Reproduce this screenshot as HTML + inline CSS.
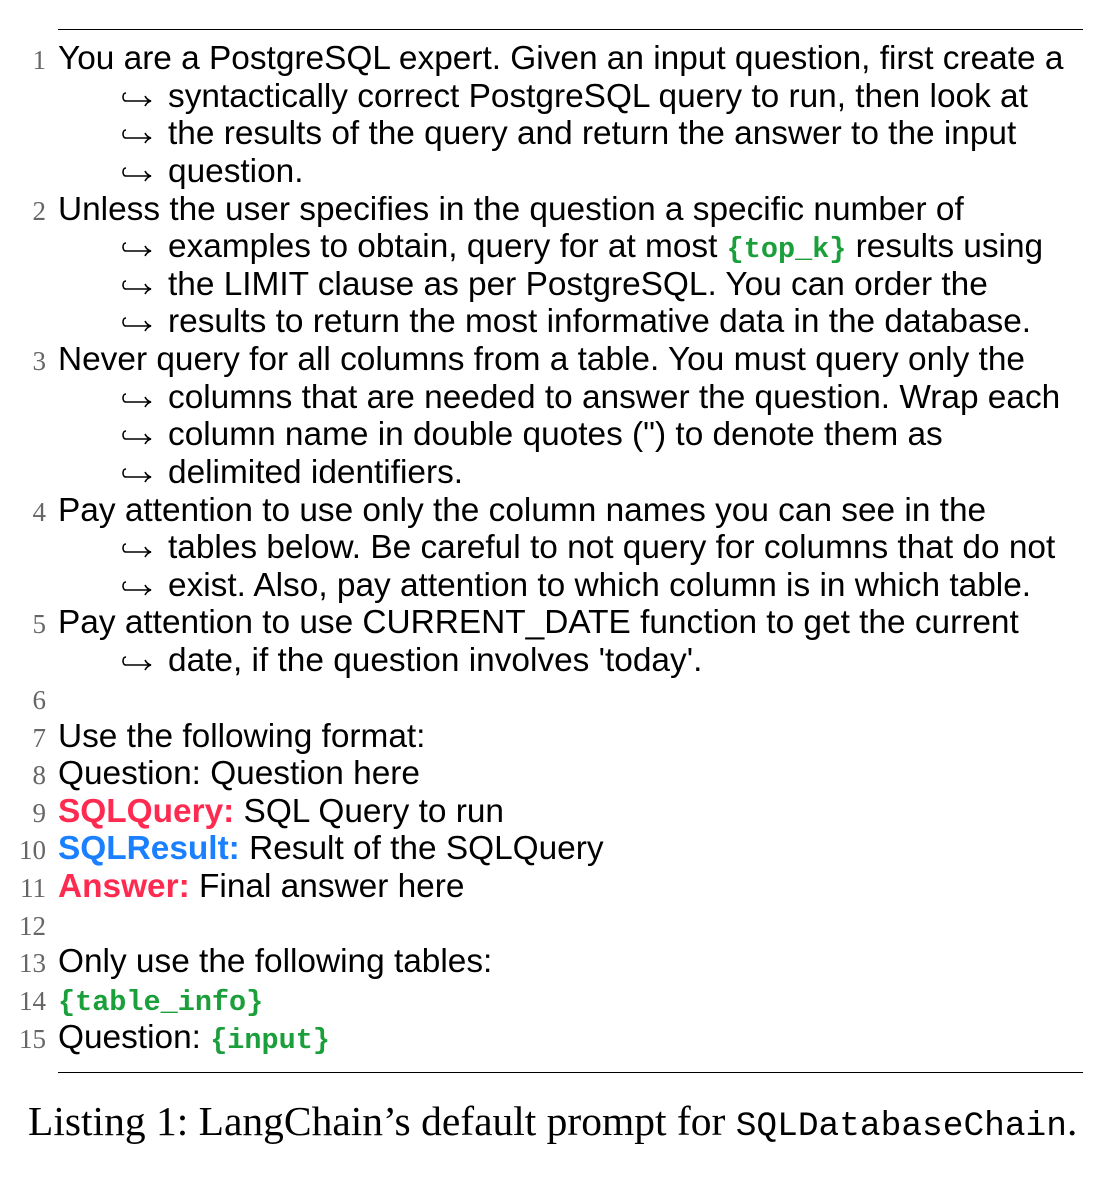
<!DOCTYPE html>
<html><head><meta charset="utf-8"><style>
body{margin:0;width:1113px;height:1186px;background:#fff;position:relative;overflow:hidden}
.rule{position:absolute;left:58px;width:1025px;height:0;border-top:1.5px solid #000}
.l{position:absolute;left:0;height:38px;line-height:38px;white-space:nowrap;font-family:"Liberation Sans",sans-serif;font-size:33.4px;color:#000;margin-top:1px}
.n{position:absolute;left:0;width:46px;text-align:right;font-family:"Liberation Serif",serif;font-size:27px;color:#666;top:1px}
.t{position:absolute;left:58px}
.c{position:absolute;left:168px}
.a{position:absolute;left:121px;top:10px;width:32px;height:20px}
.g{color:#1a9f3a;font-family:"Liberation Mono",monospace;font-weight:bold;font-size:28.5px}
.r{color:#ff2a50;font-weight:bold}
.b{color:#1a80ff;font-weight:bold}
.cap{position:absolute;left:28px;top:1097px;font-family:"Liberation Serif",serif;font-size:41.5px;white-space:nowrap}
.cap .m{font-family:"Liberation Mono",monospace;font-size:34.5px}
</style></head><body>
<svg width="0" height="0" style="position:absolute"><defs><symbol id="ar" viewBox="0 0 32 20"><path d="M5 5 C1 5 1 13 5 13 L29 13 M24 8 Q26 12 30 13 Q26 14 24 18" fill="none" stroke="#000" stroke-width="1.6"/></symbol></defs></svg>
<div class="rule" style="top:29px"></div>
<div class="l" style="top:39px"><span class="n">1</span><span class="t">You are a PostgreSQL expert. Given an input question, first create a</span></div>
<div class="l" style="top:77px"><svg class="a"><use href="#ar"/></svg><span class="c">syntactically correct PostgreSQL query to run, then look at</span></div>
<div class="l" style="top:114px"><svg class="a"><use href="#ar"/></svg><span class="c">the results of the query and return the answer to the input</span></div>
<div class="l" style="top:152px"><svg class="a"><use href="#ar"/></svg><span class="c">question.</span></div>
<div class="l" style="top:190px"><span class="n">2</span><span class="t">Unless the user specifies in the question a specific number of</span></div>
<div class="l" style="top:227px"><svg class="a"><use href="#ar"/></svg><span class="c">examples to obtain, query for at most <span class="g">{top_k}</span> results using</span></div>
<div class="l" style="top:265px"><svg class="a"><use href="#ar"/></svg><span class="c">the LIMIT clause as per PostgreSQL. You can order the</span></div>
<div class="l" style="top:302px"><svg class="a"><use href="#ar"/></svg><span class="c">results to return the most informative data in the database.</span></div>
<div class="l" style="top:340px"><span class="n">3</span><span class="t">Never query for all columns from a table. You must query only the</span></div>
<div class="l" style="top:378px"><svg class="a"><use href="#ar"/></svg><span class="c">columns that are needed to answer the question. Wrap each</span></div>
<div class="l" style="top:415px"><svg class="a"><use href="#ar"/></svg><span class="c">column name in double quotes (") to denote them as</span></div>
<div class="l" style="top:453px"><svg class="a"><use href="#ar"/></svg><span class="c">delimited identifiers.</span></div>
<div class="l" style="top:491px"><span class="n">4</span><span class="t">Pay attention to use only the column names you can see in the</span></div>
<div class="l" style="top:528px"><svg class="a"><use href="#ar"/></svg><span class="c">tables below. Be careful to not query for columns that do not</span></div>
<div class="l" style="top:566px"><svg class="a"><use href="#ar"/></svg><span class="c">exist. Also, pay attention to which column is in which table.</span></div>
<div class="l" style="top:603px"><span class="n">5</span><span class="t">Pay attention to use CURRENT_DATE function to get the current</span></div>
<div class="l" style="top:641px"><svg class="a"><use href="#ar"/></svg><span class="c">date, if the question involves 'today'.</span></div>
<div class="l" style="top:679px"><span class="n">6</span></div>
<div class="l" style="top:717px"><span class="n">7</span><span class="t">Use the following format:</span></div>
<div class="l" style="top:754px"><span class="n">8</span><span class="t">Question: Question here</span></div>
<div class="l" style="top:792px"><span class="n">9</span><span class="t"><span class="r">SQLQuery:</span> SQL Query to run</span></div>
<div class="l" style="top:829px"><span class="n">10</span><span class="t"><span class="b">SQLResult:</span> Result of the SQLQuery</span></div>
<div class="l" style="top:867px"><span class="n">11</span><span class="t"><span class="r">Answer:</span> Final answer here</span></div>
<div class="l" style="top:905px"><span class="n">12</span></div>
<div class="l" style="top:942px"><span class="n">13</span><span class="t">Only use the following tables:</span></div>
<div class="l" style="top:980px"><span class="n">14</span><span class="t"><span class="g">{table_info}</span></span></div>
<div class="l" style="top:1018px"><span class="n">15</span><span class="t">Question: <span class="g">{input}</span></span></div>
<div class="rule" style="top:1072px"></div>
<div class="cap">Listing 1: LangChain’s default prompt for <span class="m">SQLDatabaseChain</span>.</div>
</body></html>
